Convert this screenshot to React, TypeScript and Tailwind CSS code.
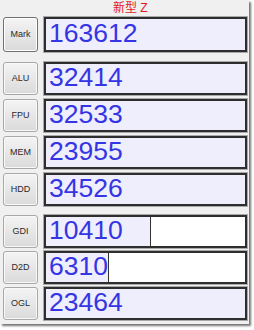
const rows = [
  { label: "Mark", value: "163612", fill: "w-full", def: true },
  { label: "ALU", value: "32414", fill: "w-full" },
  { label: "FPU", value: "32533", fill: "w-full" },
  { label: "MEM", value: "23955", fill: "w-full" },
  { label: "HDD", value: "34526", fill: "w-full" },
  { label: "GDI", value: "10410", fill: "w-[105px] border-r border-[#333]" },
  { label: "D2D", value: "6310", fill: "w-[63px] border-r border-[#333]" },
  { label: "OGL", value: "23464", fill: "w-full" },
];

function Row({ r, h, className = "" }: { r: (typeof rows)[number]; h: string; className?: string }) {
  return (
    <div className={`flex items-stretch gap-[6px] ${h} ${className}`}>
      <div
        className={`w-[35px] shrink-0 rounded-[3px] border bg-gradient-to-b from-[#f4f4f4] to-[#dadada] flex items-center justify-center text-[9px] text-[#2a2a2a] ${
          r.def ? "border-[#707070] shadow-[inset_0_0_0_1px_#fff]" : "border-[#a8a8a8] shadow-[inset_0_0_0_1px_#f8f8f8]"
        }`}
      >
        {r.label}
      </div>
      <div className="relative flex-1 border-2 border-[#2e2e2e] outline outline-1 outline-[#a9a9a9] bg-white overflow-hidden">
        <div className={`absolute inset-y-0 left-0 bg-[#eeeefd] ${r.fill}`} />
        <div className="relative h-full flex items-center pl-[3px] pb-[2px] text-[26.5px] leading-none text-[#3535e4]">
          {r.value}
        </div>
      </div>
    </div>
  );
}

export default function App() {
  return (
    <div className="w-[254px] h-[330px] bg-white" style={{ fontFamily: '"Liberation Sans", Arial, sans-serif' }}>
      <div className="w-[249px] h-[324px] bg-[#f0f0f0] shadow-[2px_2px_2px_rgba(0,0,0,0.55)] flex flex-col pl-[3px] pr-[2px]">
        <div className="h-[17px] pl-[110px] pt-[1px] text-[12px] leading-[15px] text-[#e3161d]" style={{ fontFamily: '"Liberation Sans", "Noto Sans CJK SC", sans-serif' }}>
          新型 Z
        </div>
        <Row r={rows[0]} h="h-[35px]" />
        <div className="flex flex-col gap-[4px] mt-[10px]">
          {rows.slice(1, 5).map((r) => (
            <Row key={r.label} r={r} h="h-[33px]" />
          ))}
        </div>
        <div className="flex flex-col gap-[3px] mt-[9px]">
          {rows.slice(5).map((r) => (
            <Row key={r.label} r={r} h="h-[33px]" />
          ))}
        </div>
      </div>
    </div>
  );
}
